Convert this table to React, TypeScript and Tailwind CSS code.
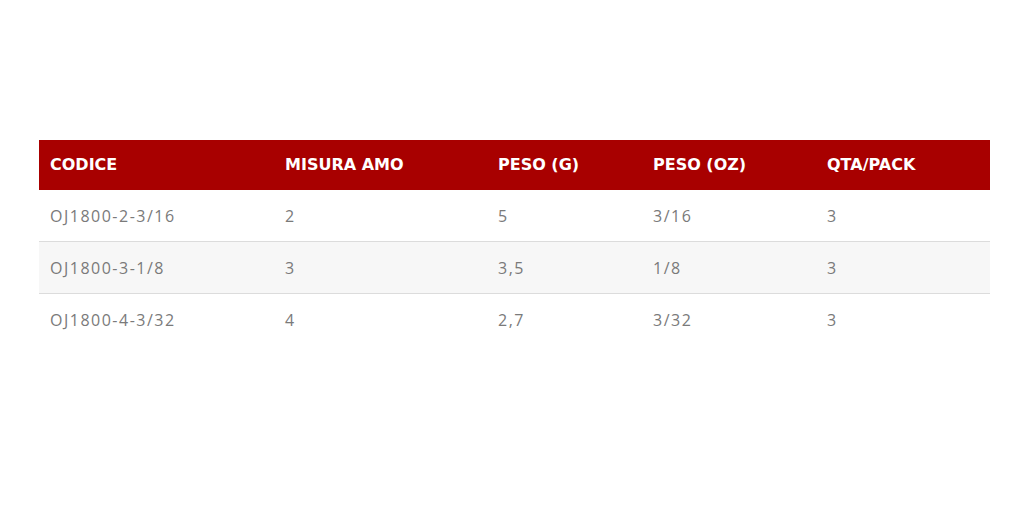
const headers = ["CODICE", "MISURA AMO", "PESO (G)", "PESO (OZ)", "QTA/PACK"];

const rows = [
  ["OJ1800-2-3/16", "2", "5", "3/16", "3"],
  ["OJ1800-3-1/8", "3", "3,5", "1/8", "3"],
  ["OJ1800-4-3/32", "4", "2,7", "3/32", "3"],
];

const widths = ["w-[235px]", "w-[213px]", "w-[155px]", "w-[174px]", "flex-1"];

export default function App() {
  return (
    <main className="w-[1024px] h-[514px] bg-white pt-[140px] pl-[39px] pr-[34px]">
      <div className="flex flex-col">
        <div className="flex h-[50px] items-center bg-[#a80000] text-white font-['DejaVu_Sans',sans-serif] font-bold text-[16px]">
          {headers.map((h, i) => (
            <div key={h} className={`${widths[i]} pl-[11px]`}>
              {h}
            </div>
          ))}
        </div>
        {rows.map((r, ri) => (
          <div
            key={r[0]}
            className={`flex h-[52px] items-center text-[16px] tracking-[1.5px] text-[#7a7a7a] font-['Open_Sans',sans-serif] font-normal ${
              ri === 1 ? "bg-[#f7f7f7]" : "bg-white"
            } ${ri < 2 ? "border-b border-[#dcdcdc]" : ""}`}
          >
            {r.map((c, i) => (
              <div key={i} className={`${widths[i]} pl-[11px]`}>
                {c}
              </div>
            ))}
          </div>
        ))}
      </div>
    </main>
  );
}
